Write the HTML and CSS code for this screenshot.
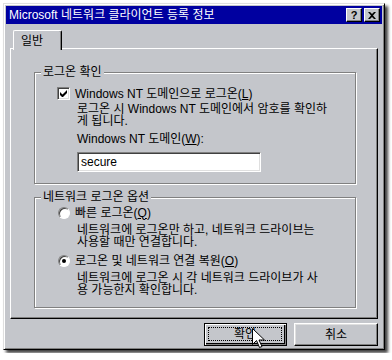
FILE: index.html
```html
<!DOCTYPE html>
<html lang="ko">
<head>
    <meta charset="UTF-8">
    <meta name="viewport" content="width=device-width, initial-scale=1.0">
    <title>Microsoft 네트워크 클라이언트 등록 정보</title>
    <link rel="stylesheet" href="styles.css">
</head>
<body>
    <div class="window">
        <div class="titlebar">
            <span class="title">Microsoft 네트워크 클라이언트 등록 정보</span>
            <div class="caption-buttons">
                <span class="cap-btn help">?</span>
                <span class="cap-btn close">
                    <svg width="8" height="7" viewBox="0 0 8 7">
                        <path d="M0 0h2l2 2 2-2h2L5 3.5 8 7H6L4 5 2 7H0l3-3.5z" fill="#000"/>
                    </svg>
                </span>
            </div>
        </div>

        <div class="tabs">
            <div class="tab active">일반</div>
        </div>

        <div class="panel">
            <fieldset class="group">
                <legend>로그온 확인</legend>
                <div class="group-body logon-body">
                    <div class="option">
                        <span class="checkbox">
                            <svg width="7" height="7" viewBox="0 0 7 7">
                                <path d="M0 2v3l2 2h1l4-4V0L2.5 4.5z" fill="#000"/>
                            </svg>
                        </span>
                        <span>Windows NT 도메인으로 로그온(<u>L</u>)</span>
                    </div>
                    <p class="desc">로그온 시 Windows NT 도메인에서 암호를 확인하<br>게 됩니다.</p>
                    <label class="field-label">Windows NT 도메인(<u>W</u>):</label>
                    <div class="textbox">secure</div>
                </div>
            </fieldset>

            <fieldset class="group options">
                <legend>네트워크 로그온 옵션</legend>
                <div class="group-body options-body">
                    <div class="option">
                        <span class="radio"></span>
                        <span>빠른 로그온(<u>Q</u>)</span>
                    </div>
                    <p class="desc">네트워크에 로그온만 하고, 네트워크 드라이브는<br>사용할 때만 연결합니다.</p>
                    <div class="option second">
                        <span class="radio checked"></span>
                        <span>로그온 및 네트워크 연결 복원(<u>O</u>)</span>
                    </div>
                    <p class="desc">네트워크에 로그온 시 각 네트워크 드라이브가 사<br>용 가능한지 확인합니다.</p>
                </div>
            </fieldset>
        </div>

        <div class="actions">
            <button class="btn default">
                <span class="focus">확인</span>
                <svg class="cursor" width="13" height="21" viewBox="0 0 13 21">
                    <path d="M0.5 0.5v16l4-4 3 7 2.5-1-3-6.5h5.5z" fill="#fff" stroke="#000" stroke-width="1"/>
                </svg>
            </button>
            <button class="btn">취소</button>
        </div>
    </div>
</body>
</html>
```

FILE: styles.css
```css
* {
    margin: 0;
    padding: 0;
    box-sizing: border-box;
}

:root {
    --face: #c4c6cb;
    --light: #ffffff;
    --shade: #808080;
    --dark: #000000;
    --title: #0000a0;
}

body {
    background: #fff;
    padding: 3px;
    font-family: "Liberation Sans", "Noto Sans CJK KR", sans-serif;
    font-size: 12px;
    line-height: 12px;
    color: #000;
}

.window {
    width: 382px;
    padding: 2px 2px 3px;
    background: var(--face);
    border: 1px solid;
    border-color: #dfdfdf var(--dark) var(--dark) #dfdfdf;
    box-shadow: inset 1px 1px var(--light), inset -1px -1px var(--shade), 3px 3px 3px rgba(0, 0, 0, 0.75);
}

/* title bar */
.titlebar {
    height: 18px;
    display: flex;
    align-items: center;
    justify-content: space-between;
    padding: 0 2px 0 3px;
    background: var(--title);
    color: #fff;
}

.caption-buttons {
    display: flex;
    gap: 2px;
}

.cap-btn {
    width: 16px;
    height: 14px;
    display: flex;
    align-items: center;
    justify-content: center;
    background: var(--face);
    border: 1px solid;
    border-color: var(--light) var(--dark) var(--dark) var(--light);
    box-shadow: inset -1px -1px var(--shade);
    color: #000;
}

.cap-btn.help {
    font-weight: bold;
    font-size: 11px;
}

/* tabs */
.tabs {
    display: flex;
    height: 18px;
    margin: 6px 4px 0;
    padding-left: 3px;
}

.tab {
    position: relative;
    z-index: 1;
    width: 49px;
    height: 20px;
    padding: 4px 0 0 7px;
    background: var(--face);
    border: 1px solid;
    border-bottom: none;
    border-color: var(--light) var(--dark) var(--face) var(--light);
    border-radius: 2px 2px 0 0;
    box-shadow: inset -1px 0 var(--shade);
}

.panel {
    margin: 0 4px;
    padding: 17px 21px 10px 23px;
    border: 1px solid;
    border-color: var(--light) var(--dark) var(--dark) var(--light);
    box-shadow: inset -1px -1px var(--shade);
}

/* group boxes */
.group {
    border: 1px solid var(--shade);
    box-shadow: inset 1px 1px var(--light), 1px 1px var(--light);
    min-width: 0;
}

.group legend {
    margin-left: 6px;
    padding: 0 2px;
    line-height: 12px;
    background: var(--face);
}

.group.options {
    margin-top: 7px;
}

.group-body {
    padding-left: 22px;
}

.logon-body {
    padding-top: 9px;
    padding-bottom: 11px;
}

.options-body {
    padding-top: 3px;
    padding-bottom: 11px;
}

.option {
    display: flex;
    align-items: center;
    gap: 5px;
    height: 13px;
}

.option.second {
    margin-top: 6px;
}

.desc {
    margin: 3px 0 0 20px;
}

.options-body .desc {
    margin-top: 5px;
}

.field-label {
    display: block;
    margin: 6px 0 0 20px;
}

.checkbox {
    width: 13px;
    height: 13px;
    display: flex;
    align-items: center;
    justify-content: center;
    background: #fff;
    border: 1px solid;
    border-color: var(--shade) var(--light) var(--light) var(--shade);
    box-shadow: inset 1px 1px #404040, inset -1px -1px #dfdfdf;
}

.radio {
    width: 12px;
    height: 12px;
    margin-left: 1px;
    border-radius: 50%;
    background: #fff;
    border: 1px solid;
    border-color: var(--shade) var(--light) var(--light) var(--shade);
    box-shadow: inset 1px 1px #404040;
    display: flex;
    align-items: center;
    justify-content: center;
}

.radio.checked::after {
    content: "";
    width: 4px;
    height: 4px;
    border-radius: 50%;
    background: #000;
}

.textbox {
    width: 184px;
    height: 20px;
    margin: 7px 0 0 20px;
    padding: 3px 0 0 3px;
    background: #fff;
    border: 1px solid;
    border-color: var(--shade) var(--light) var(--light) var(--shade);
    box-shadow: inset 1px 1px #404040, inset -1px -1px #dfdfdf;
}

/* buttons */
.actions {
    display: flex;
    justify-content: flex-end;
    gap: 7px;
    margin: 4px 4px 0;
}

.btn {
    position: relative;
    width: 84px;
    height: 23px;
    font: inherit;
    background: var(--face);
    border: 1px solid;
    border-color: var(--light) var(--dark) var(--dark) var(--light);
    box-shadow: inset -1px -1px var(--shade), inset 1px 1px #dfdfdf;
    display: flex;
    align-items: center;
    justify-content: center;
}

.btn.default {
    width: 83px;
    border-color: var(--dark);
    box-shadow: inset 1px 1px var(--light), inset -1px -1px var(--shade), inset -2px -2px var(--dark);
}

.focus {
    position: absolute;
    inset: 3px 4px 4px 3px;
    border: 1px dotted #000;
    display: flex;
    align-items: center;
    justify-content: center;
}

.cursor {
    position: absolute;
    left: 47px;
    top: 4px;
}
```
